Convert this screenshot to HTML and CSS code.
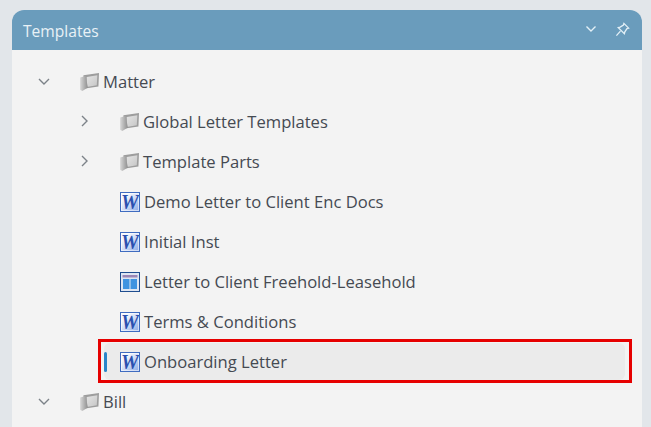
FILE: index.html
```html
<!DOCTYPE html>
<html lang="en">
<head>
    <meta charset="UTF-8">
    <meta name="viewport" content="width=device-width, initial-scale=1.0">
    <title>Templates</title>
    <link rel="stylesheet" href="styles.css">
</head>
<body>
    <svg class="defs" width="0" height="0" aria-hidden="true">
        <defs>
            <linearGradient id="folderFront" x1="0" y1="0" x2="1" y2="0">
                <stop offset="0" stop-color="#d8d8d8"/>
                <stop offset="1" stop-color="#8e8e8e"/>
            </linearGradient>
            <linearGradient id="folderBack" x1="0" y1="0" x2="1" y2="1">
                <stop offset="0" stop-color="#e4e4e4"/>
                <stop offset="1" stop-color="#c6c6c6"/>
            </linearGradient>
        </defs>
        <symbol id="folder" viewBox="0 0 18 18">
            <polygon points="4,3 18,1 17.5,13 4,15" fill="#9d9d9d"/>
            <polygon points="7,4.5 16.5,3 16,12 7,13.5" fill="url(#folderBack)"/>
            <polygon points="1,5 6,3.5 8,14 3,17 1,16" fill="url(#folderFront)"/>
        </symbol>
        <symbol id="layout" viewBox="0 0 20 20">
            <rect x="0.5" y="0.5" width="19" height="19" fill="#dfe6f2" stroke="#1f4d8f"/>
            <rect x="2.5" y="3" width="15" height="2.5" fill="#9b86b5"/>
            <rect x="3" y="7" width="6.5" height="10" fill="#3f93e0"/>
            <rect x="10.5" y="7" width="6.5" height="10" fill="#3f93e0"/>
        </symbol>
    </svg>

    <section class="panel">
        <header class="panel-head">
            <h2 class="panel-title">Templates</h2>
            <div class="panel-tools">
                <svg class="tool-chevron" width="12" height="8" viewBox="0 0 12 8"><path d="M1.5 1.5 L6 6 L10.5 1.5"/></svg>
                <svg class="tool-pin" width="15" height="15" viewBox="0 0 16 16"><path d="M9.5 1.5 L14.5 6.5 L12.8 7 L10.5 10.5 L10 12.5 L3.5 6 L5.5 5.5 L9 3.2 Z M5.8 9.7 L1.5 14.5"/></svg>
            </div>
        </header>

        <ul class="tree">
            <li class="row">
                <svg class="chevron" viewBox="0 0 12 12"><path d="M1 4 L6 9 L11 4"/></svg>
                <svg class="icon icon-folder"><use href="#folder"/></svg>
                <span class="label">Matter</span>
            </li>
            <li class="row row-child">
                <svg class="chevron" viewBox="0 0 12 12"><path d="M4 1 L9 6 L4 11"/></svg>
                <svg class="icon icon-folder"><use href="#folder"/></svg>
                <span class="label">Global Letter Templates</span>
            </li>
            <li class="row row-child">
                <svg class="chevron" viewBox="0 0 12 12"><path d="M4 1 L9 6 L4 11"/></svg>
                <svg class="icon icon-folder"><use href="#folder"/></svg>
                <span class="label">Template Parts</span>
            </li>
            <li class="row row-child">
                <span class="chevron"></span>
                <span class="icon word-icon">W</span>
                <span class="label">Demo Letter to Client Enc Docs</span>
            </li>
            <li class="row row-child">
                <span class="chevron"></span>
                <span class="icon word-icon">W</span>
                <span class="label">Initial Inst</span>
            </li>
            <li class="row row-child">
                <span class="chevron"></span>
                <svg class="icon"><use href="#layout"/></svg>
                <span class="label">Letter to Client Freehold-Leasehold</span>
            </li>
            <li class="row row-child">
                <span class="chevron"></span>
                <span class="icon word-icon">W</span>
                <span class="label">Terms &amp; Conditions</span>
            </li>
            <li class="row row-child row-selected">
                <span class="chevron"></span>
                <span class="icon word-icon">W</span>
                <span class="label">Onboarding Letter</span>
                <span class="callout"></span>
            </li>
            <li class="row">
                <svg class="chevron" viewBox="0 0 12 12"><path d="M1 4 L6 9 L11 4"/></svg>
                <svg class="icon icon-folder"><use href="#folder"/></svg>
                <span class="label">Bill</span>
            </li>
        </ul>
    </section>
</body>
</html>
```

FILE: styles.css
```css
html, body {height: 100%;}
body {margin: 0; padding: 10px 9px 0 12px; box-sizing: border-box; background: #e2e6ea; overflow: hidden; font-family: "Open Sans", "Noto Sans", sans-serif; color: #454a52;}
.defs {position: absolute;}

.panel {background: #f3f3f3; border-radius: 12px 12px 0 0; height: 100%; overflow: hidden;}
.panel-head {display: flex; align-items: center; justify-content: space-between; height: 40px; padding: 0 12px 2px 11px; box-sizing: border-box; background: #6a9cbc; color: #e8f1f6;}
.panel-title {margin: 4px 0 0; font-size: 15.6px; font-weight: 400;}
.panel-tools {display: flex; align-items: center; gap: 18px;}
.tool-chevron path, .tool-pin path {fill: none; stroke: #e3f0f7; stroke-width: 1.4;}

.tree {list-style: none; margin: 0; padding: 12px 0 0;}
.row {display: flex; align-items: center; height: 40px; padding-left: 26px;}
.row-child {padding-left: 66px;}
.chevron {flex: none; width: 12px; height: 12px; margin: 0 30px 2px 0;}
.chevron path {fill: none; stroke: #7c8288; stroke-width: 1.4;}
.icon {flex: none; width: 20px; height: 20px; margin-bottom: 1px;}
.icon-folder {margin-left: -1px;}
.label {margin-left: 4px; padding-bottom: 2px; font-size: 16.6px; white-space: nowrap;}

.word-icon {box-sizing: border-box; display: flex; align-items: center; justify-content: center; overflow: hidden; border: 1px solid #3f6cc0; background: linear-gradient(135deg, #f4f7fd 25%, #8fabe6); box-shadow: inset 0 0 0 1px rgba(255,255,255,0.55); font-family: "Liberation Serif", serif; font-size: 20px; line-height: 1; font-weight: bold; font-style: italic; color: #2b50b0;}

.row-selected {position: relative; z-index: 1;}
.row-selected::before {content: ""; position: absolute; z-index: -1; left: 92px; right: 17px; top: 1px; bottom: 2px; background: #ebebeb; border-radius: 6px;}
.row-selected::after {content: ""; position: absolute; left: 92px; top: 10px; width: 3px; height: 20px; background: #2a85c9; border-radius: 2px;}
.callout {position: absolute; left: 86px; right: 10px; top: -3px; bottom: -1px; border: 3px solid #e60000;}
```
